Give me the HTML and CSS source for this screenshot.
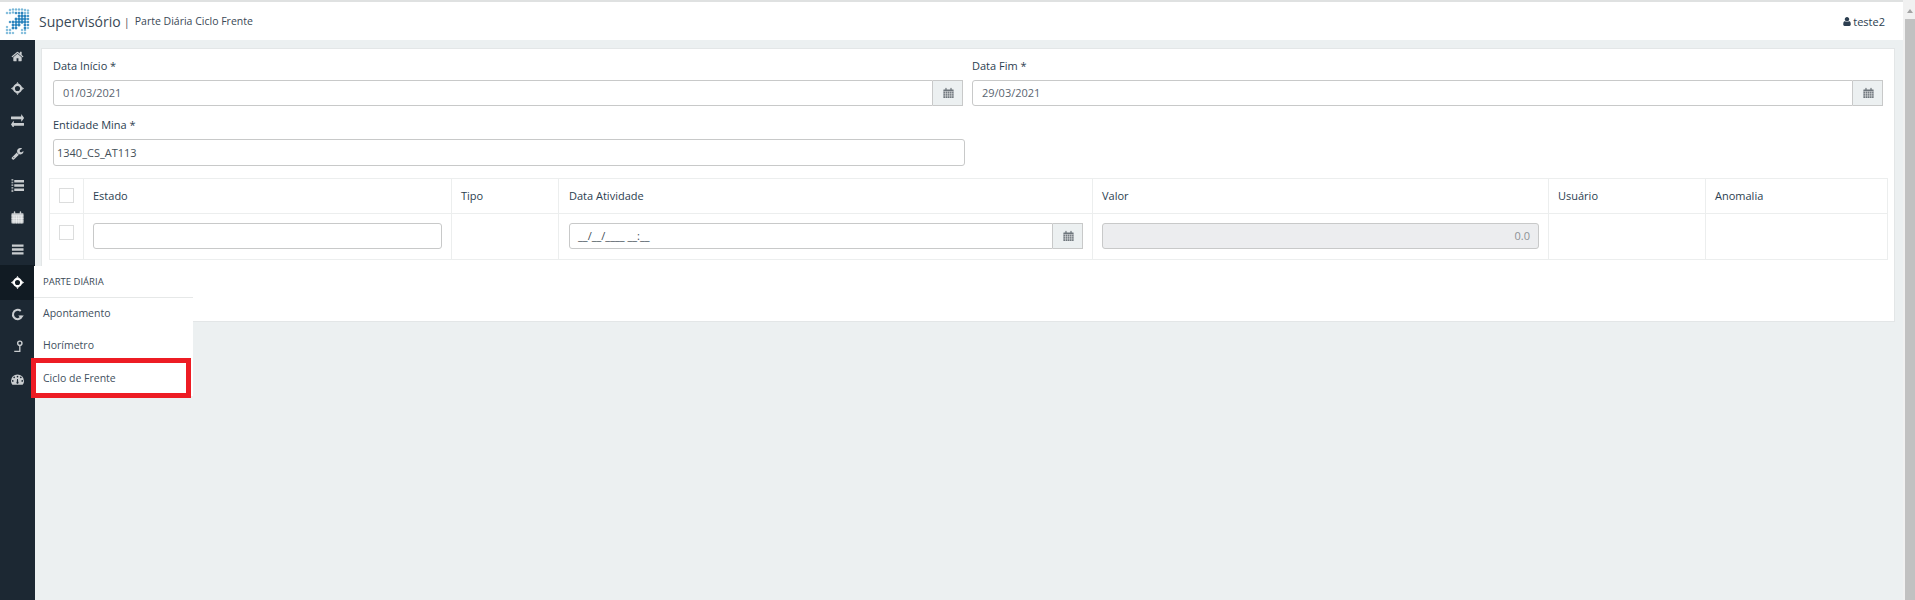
FILE: index.html
```html
<!DOCTYPE html>
<html lang="pt">
<head>
<meta charset="utf-8">
<title>Supervisório</title>
<link rel="stylesheet" href="styles.css">
</head>
<body>
<svg class="defs" width="0" height="0" aria-hidden="true">
  <symbol id="i-cal" viewBox="0 0 14 14">
    <path fill="currentColor" d="M1 2.500h2V1.200a.8.8 0 0 1 1.600 0V2.500h4.800V1.200a.8.8 0 0 1 1.600 0V2.500h2a.5.5 0 0 1 .5.5v10a.5.5 0 0 1-.5.5H1a.5.5 0 0 1-.5-.5V3a.5.5 0 0 1 .5-.5z"/>
    <path fill="none" stroke="#fff" stroke-opacity=".8" stroke-width=".7" d="M.5 5.200h13M.5 7.900h13M.5 10.700h13M3.200 5v8.500M5.800 5v8.500M8.400 5v8.500M11 5v8.500"/>
  </symbol>
  <symbol id="i-target" viewBox="0 0 14 14">
    <circle cx="7" cy="7" r="3.900" fill="none" stroke="currentColor" stroke-width="2.300"/>
    <path fill="currentColor" d="M7 0l1.500 2h-3zM7 14l-1.500-2h3zM0 7l2-1.500v3zM14 7l-2 1.500v-3z"/>
  </symbol>
</svg>
<div class="viewport">
  <div class="app">
    <header class="topbar">
      <div class="brand">
        <svg class="logo" viewBox="0 0 26 27" aria-hidden="true">
          <g class="logo-light">
            <circle cx="6" cy="2" r="1"/><circle cx="9" cy="1.500" r="1"/><circle cx="12" cy="1.500" r="1"/><circle cx="15" cy="1.500" r="1"/><circle cx="18" cy="1.500" r="1"/><circle cx="21" cy="2" r="1"/><circle cx="24" cy="2.500" r=".9"/>
            <circle cx="3" cy="5" r="1"/><circle cx="6" cy="5" r="1"/><circle cx="9" cy="4.500" r="1"/><circle cx="21" cy="5" r="1.100"/><circle cx="24" cy="5" r="1"/>
            <circle cx="3" cy="22" r="1"/><circle cx="6" cy="22" r="1.100"/><circle cx="3" cy="25" r="1"/><circle cx="6" cy="25" r="1"/><circle cx="9" cy="25" r=".9"/><circle cx="18" cy="25" r=".9"/><circle cx="21" cy="25" r="1"/>
            <circle cx="3" cy="19" r=".9"/><circle cx="24" cy="20" r=".9"/><circle cx="21" cy="22" r="1"/><circle cx="18" cy="22" r=".9"/>
          </g>
          <g class="logo-dark">
            <circle cx="12" cy="5" r="1.100"/><circle cx="15" cy="5" r="1.100"/><circle cx="18" cy="5" r="1.200"/>
            <circle cx="15" cy="8" r="1.200"/><circle cx="18" cy="8" r="1.400"/><circle cx="21" cy="8" r="1.300"/><circle cx="24" cy="8" r="1"/>
            <circle cx="12" cy="11" r="1.200"/><circle cx="15" cy="11" r="1.400"/><circle cx="18" cy="11" r="1.500"/><circle cx="21" cy="11" r="1.400"/><circle cx="24" cy="11" r="1"/>
            <circle cx="6" cy="14" r="1"/><circle cx="9" cy="14" r="1.200"/><circle cx="12" cy="14" r="1.400"/><circle cx="15" cy="14" r="1.500"/><circle cx="18" cy="14" r="1.500"/><circle cx="21" cy="14" r="1.400"/><circle cx="24" cy="14" r="1"/>
            <circle cx="9" cy="17" r="1.200"/><circle cx="12" cy="17" r="1.400"/><circle cx="15" cy="17" r="1.300"/><circle cx="21" cy="17" r="1.200"/><circle cx="24" cy="17" r="1"/>
            <circle cx="9" cy="20" r="1.200"/><circle cx="12" cy="20" r="1.200"/><circle cx="21" cy="20" r="1.200"/>
          </g>
        </svg>
        <span class="app-name">Supervisório</span>
        <span class="sep">|</span>
        <span class="page-title">Parte Diária Ciclo Frente</span>
      </div>
      <div class="user">
        <svg class="user-icon" viewBox="256 128 1280 1536" aria-hidden="true"><path fill="currentColor" d="M1536 1399q0 109-62.500 187t-150.500 78h-854q-88 0-150.500-78t-62.500-187q0-85 8.500-160.500t31.500-152 58.500-131 94-89 134.500-34.500q131 128 313 128t313-128q76 0 134.500 34.500t94 89 58.500 131 31.500 152 8.500 160.500zm-256-887q0 159-112.500 271.500t-271.500 112.500-271.500-112.500-112.500-271.500 112.500-271.500 271.500-112.500 271.500 112.500 112.500 271.500z"/></svg>
        <span>teste2</span>
      </div>
    </header>
    <div class="body-row">
      <nav class="sidebar">
        <a class="nav-item"><svg class="nav-icon" viewBox="0 0 1792 1792"><path fill="currentColor" d="M1472 992v480q0 26-19 45t-45 19h-384v-384h-256v384h-384q-26 0-45-19t-19-45v-480q0-1 .5-3t.5-3l575-474 575 474q1 2 1 6zm223-69l-62 74q-8 9-21 11h-3q-13 0-21-7l-692-577-692 577q-12 8-24 7-13-2-21-11l-62-74q-8-10-7-23.500t11-21.500l719-599q32-26 76-26t76 26l244 204v-195q0-14 9-23t23-9h192q14 0 23 9t9 23v408l219 182q10 8 11 21.500t-7 23.500z"/></svg></a>
        <a class="nav-item"><svg class="nav-icon"><use href="#i-target"/></svg></a>
        <a class="nav-item"><svg class="nav-icon" viewBox="0 256 1792 1280" preserveAspectRatio="none"><path fill="currentColor" d="M1792 1184v192q0 13-9.500 22.500t-22.500 9.500h-1376v192q0 13-9.500 22.500t-22.500 9.500q-12 0-24-10l-319-320q-9-9-9-22 0-14 9-23l320-320q9-9 23-9 13 0 22.500 9.500t9.500 22.500v192h1376q13 0 22.500 9.500t9.500 22.500zm0-544q0 14-9 23l-320 320q-9 9-23 9-13 0-22.500-9.500t-9.500-22.500v-192h-1376q-13 0-22.500-9.500t-9.500-22.500v-192q0-13 9.500-22.500t22.500-9.500h1376v-192q0-14 9-23t23-9q12 0 24 10l319 319q9 9 9 23z"/></svg></a>
        <a class="nav-item"><svg class="nav-icon" viewBox="0 0 1792 1792"><path fill="currentColor" d="M448 1472q0-26-19-45t-45-19-45 19-19 45 19 45 45 19 45-19 19-45zm644-420l-682 682q-37 37-90 37-52 0-91-37l-106-108q-38-36-38-90 0-53 38-91l681-681q39 98 114.500 173.500t173.500 114.500zm634-435q0 39-23 106-47 134-164.500 217.500t-258.500 83.500q-185 0-316.500-131.500t-131.500-316.500 131.500-316.500 316.500-131.500q58 0 121.500 16.500t107.500 46.500q16 11 16 28t-16 28l-293 169v224l193 107q5-3 79-48.500t135.500-81 70.500-35.500q15 0 23.500 10t8.500 25z"/></svg></a>
        <a class="nav-item"><svg class="nav-icon" viewBox="0 0 14 14"><path fill="currentColor" d="M3.500 1.200H14v2.600H3.500zM3.500 5.700H14v2.600H3.500zM3.500 10.200H14v2.600H3.500zM.5 0h2v.8h-2zM.5 1.700h2v.8h-2zM.5 3.400h2v.8h-2zM.5 5.100h2v.8h-2zM.5 6.800h2v.8h-2zM.5 8.500h2v.8h-2zM.5 10.200h2v.8h-2zM.5 11.900h2v.8h-2zM.5 13.200h2v.8h-2z"/></svg></a>
        <a class="nav-item"><svg class="nav-icon"><use href="#i-cal"/></svg></a>
        <a class="nav-item"><svg class="nav-icon" viewBox="0 0 14 14"><path fill="currentColor" d="M1 1.500h12.500v2.600H1zM1 5.700h12.500v2.600H1zM1 9.900h12.500v2.600H1z"/></svg></a>
        <a class="nav-item active"><svg class="nav-icon"><use href="#i-target"/></svg></a>
        <a class="nav-item"><svg class="nav-icon" viewBox="0 0 14 14"><path fill="none" stroke="currentColor" stroke-width="2.200" d="M10.500 3.300A5 5 0 1 0 7.500 12a5 5 0 0 0 4-3.500"/><path fill="currentColor" d="M7.800 8.200h6l-3 3.400z"/></svg></a>
        <a class="nav-item"><svg class="nav-icon" viewBox="0 0 14 14"><circle cx="9.500" cy="3.500" r="2.300" fill="none" stroke="currentColor" stroke-width="1.500"/><path fill="none" stroke="currentColor" stroke-width="1.400" d="M9.500 6v6.300H3.500"/></svg></a>
        <a class="nav-item"><svg class="nav-icon" viewBox="0 0 14 14"><path fill="currentColor" fill-rule="evenodd" d="M7 1.500a7 7 0 0 1 7 7c0 1.700-.6 3.200-1.500 4.200h-11A6.500 6.500 0 0 1 0 8.500a7 7 0 0 1 7-7zM3.400 3.900a.9.9 0 1 0 0 1.800.9.9 0 0 0 0-1.800zM7 3a.9.9 0 1 0 0 1.800A.9.9 0 0 0 7 3zm3.600.9a.9.9 0 1 0 0 1.800.9.9 0 0 0 0-1.800zM1.900 7.600a.9.9 0 1 0 0 1.800.9.9 0 0 0 0-1.800zm10.200 0a.9.9 0 1 0 0 1.800.9.9 0 0 0 0-1.800zM6.500 6.500l-.3 3.200a1.100 1.100 0 1 0 1.600 0l-.3-3.200z"/></svg></a>
      </nav>
      <main class="content">
        <section class="card">
          <div class="form-grid">
            <div class="field">
              <label class="label">Data Início *</label>
              <div class="input-group">
                <div class="input date-input">01/03/2021</div>
                <span class="addon"><svg class="cal"><use href="#i-cal"/></svg></span>
              </div>
            </div>
            <div class="field">
              <label class="label">Data Fim *</label>
              <div class="input-group">
                <div class="input date-input">29/03/2021</div>
                <span class="addon"><svg class="cal"><use href="#i-cal"/></svg></span>
              </div>
            </div>
            <div class="field">
              <label class="label">Entidade Mina *</label>
              <div class="input entity-input">1340_CS_AT113</div>
            </div>
          </div>
          <table class="grid">
            <colgroup>
              <col class="c-check"><col class="c-estado"><col class="c-tipo"><col class="c-data"><col class="c-valor"><col class="c-user"><col class="c-anom">
            </colgroup>
            <thead>
              <tr>
                <th><span class="check"></span></th>
                <th>Estado</th>
                <th>Tipo</th>
                <th class="date-col">Data Atividade</th>
                <th>Valor</th>
                <th>Usuário</th>
                <th>Anomalia</th>
              </tr>
            </thead>
            <tbody>
              <tr>
                <td class="check-cell"><span class="check"></span></td>
                <td><div class="input"></div></td>
                <td></td>
                <td class="date-col">
                  <div class="input-group">
                    <div class="input mask-input">__/__/____ __:__</div>
                    <span class="addon"><svg class="cal"><use href="#i-cal"/></svg></span>
                  </div>
                </td>
                <td><div class="input disabled">0.0</div></td>
                <td></td>
                <td></td>
              </tr>
            </tbody>
          </table>
        </section>
      </main>
    </div>
    <div class="flyout">
      <div class="flyout-title">PARTE DIÁRIA</div>
      <a class="flyout-item">Apontamento</a>
      <a class="flyout-item">Horímetro</a>
      <a class="flyout-item">Ciclo de Frente</a>
    </div>
    <div class="highlight"></div>
  </div>
  <div class="scrollbar">
    <span class="scroll-arrow"></span>
    <span class="scroll-thumb"></span>
  </div>
</div>
</body>
</html>
```

FILE: styles.css
```css
* { box-sizing: border-box; }
html, body { margin: 0; height: 100%; overflow: hidden; }
body {
  font-family: "Open Sans", "Liberation Sans", sans-serif;
  font-size: 11px;
  color: #2c3e50;
  background: #ecf0f1;
}
.defs { position: absolute; }
.viewport { display: flex; height: 600px; }
.app { position: relative; flex: 1; display: flex; flex-direction: column; min-width: 0; }

.topbar {
  height: 40px;
  display: flex;
  align-items: center;
  justify-content: space-between;
  background: #fff;
  border-top: 2px solid #dfe1e1;
  padding: 0 18px 0 4px;
}
.brand { display: flex; align-items: center; }
.logo { width: 26px; height: 27px; margin-right: 9px; }
.logo-light { fill: #6fb3d6; stroke: #6fb3d6; stroke-width: .4; }
.logo-dark { fill: #2a84bd; stroke: #2a84bd; stroke-width: .4; }
.app-name { font-size: 14px; color: #3a4956; }
.sep { font-size: 11px; margin: 0 5px 0 3px; color: #555; }
.page-title { font-size: 10.500px; color: #3a4956; }
.user { display: flex; align-items: center; gap: 2px; font-size: 11px; }
.user-icon { width: 8px; height: 9px; color: #2c3e50; }

.body-row { flex: 1; display: flex; min-height: 0; }
.sidebar { width: 35px; background: #1c2833; display: flex; flex-direction: column; }
.nav-item { height: 32.300px; display: flex; align-items: center; justify-content: center; padding-right: 1px; color: #c9cdd0; flex: none; }
.nav-item.active { height: 35px; margin: -1px 0 -1.700px; background: #111b23; color: #fff; }
.nav-icon { width: 13px; height: 13px; }

.content { flex: 1; padding: 8px 8px 0 6px; min-width: 0; }
.card {
  height: 274px;
  background: #fff;
  border: 1px solid #e3e6e7;
  padding: 0 7px;
}
.form-grid {
  display: grid;
  grid-template-columns: 910px 911px;
  column-gap: 9px;
  padding: 9px 4px 0;
}
.field { height: 59px; }
.label { display: block; height: 22px; line-height: 16px; color: #2c3e50; }
.input {
  height: 26px;
  border: 1px solid #c8c9c9;
  border-radius: 3px;
  background: #fff;
  line-height: 24px;
  color: #444f58;
}
.input-group { display: flex; }
.input-group .input { flex: 1; border-radius: 3px 0 0 3px; }
.date-input { padding-left: 9px; color: #5a6570; }
.entity-input { height: 27px; line-height: 25px; padding-left: 3px; width: 912px; }
.mask-input { padding-left: 8px; }
.disabled { background: #ecedef; text-align: right; padding-right: 8px; color: #8d9296; }
.addon {
  width: 30px;
  flex: none;
  display: flex;
  align-items: center;
  justify-content: center;
  padding-left: 1px;
  background: #ecf0f1;
  border: 1px solid #c8c9c9;
  border-left: 0;
}
.cal { width: 11px; height: 12px; color: #6e767c; }

.grid { width: 1838px; table-layout: fixed; border-collapse: collapse; margin-top: 2px; }
.c-check { width: 34px; }
.c-estado { width: 368px; }
.c-tipo { width: 107px; }
.c-data { width: 534px; }
.c-valor { width: 456px; }
.c-user { width: 157px; }
.c-anom { width: 182px; }
.grid th, .grid td { border: 1px solid #eceeee; padding: 0 9px; }
.grid th { height: 35px; padding-bottom: 2px; text-align: left; font-weight: 400; color: #2c3e50; }
.grid td { height: 46px; vertical-align: middle; padding-bottom: 1px; }
.grid .date-col { padding-left: 10px; }
.grid .check-cell { vertical-align: top; padding-top: 11px; }
.check { display: block; width: 15px; height: 15px; border: 1px solid #dcdddd; background: #fff; }

.flyout {
  position: absolute;
  left: 34px;
  top: 266px;
  width: 159px;
  height: 130px;
  background: #fff;
}
.flyout-title {
  height: 32px;
  line-height: 31px;
  padding-left: 9px;
  font-size: 9.500px;
  color: #3a4956;
  border-bottom: 1px solid #e6e8e8;
}
.flyout-item { display: block; height: 32.300px; line-height: 30px; padding-left: 9px; font-size: 10.500px; color: #3f5060; }
.highlight {
  position: absolute;
  left: 31px;
  top: 358px;
  width: 160px;
  height: 40px;
  border: 5px solid #ed1c24;
}

.scrollbar { width: 12px; background: #f1f1f1; display: flex; flex-direction: column; align-items: flex-end; }
.scroll-arrow { width: 10px; height: 19px; position: relative; }
.scroll-arrow::after {
  content: "";
  position: absolute;
  left: 2px;
  top: 9px;
  border-left: 3px solid transparent;
  border-right: 3px solid transparent;
  border-bottom: 4px solid #a3a3a3;
}
.scroll-thumb { width: 10px; flex: 1; background: #c1c1c1; }
```
